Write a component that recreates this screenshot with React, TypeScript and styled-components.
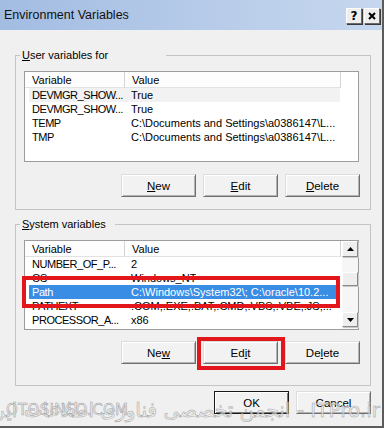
import styled, { createGlobalStyle } from "styled-components";

const GlobalStyle = createGlobalStyle`
  html, body {
    margin: 0;
    padding: 0;
    background: #ffffff;
  }
  body {
    font-family: "Liberation Sans", Arial, sans-serif;
    font-size: 11px;
    color: #000;
  }
`;

const Window = styled.div`
  position: relative;
  width: 384px;
  height: 428px;
  box-sizing: border-box;
  background: #f0f0f0;
  border-right: 2px solid #5c5c5c;
  border-bottom: 2px solid #5c5c5c;
  display: flex;
  flex-direction: column;
  overflow: hidden;
`;

const TitleBar = styled.div`
  height: 30px;
  flex-shrink: 0;
  display: flex;
  align-items: center;
  justify-content: space-between;
  padding: 0 2px 0 4px;
  background: linear-gradient(90deg, #a2bce2 0%, #b9cdea 60%, #c6d7ee 100%);
`;

const Title = styled.span`
  font-size: 12.5px;
  color: #111;
`;

const TitleButtons = styled.div`
  display: flex;
  gap: 2px;
  margin-top: 2px;
`;

const CaptionButton = styled.div`
  width: 16px;
  height: 16px;
  box-sizing: border-box;
  background: #eeeeee;
  border: 1px solid;
  border-color: #ffffff #6a6a6a #6a6a6a #ffffff;
  box-shadow: 1px 1px 0 #3a3a3a;
  display: flex;
  align-items: center;
  justify-content: center;
  font-weight: bold;
  font-size: 12px;
  font-family: "DejaVu Sans", sans-serif;
`;

const Content = styled.div`
  display: flex;
  flex-direction: column;
  padding: 18px 0 0 15px;
`;

const Group = styled.fieldset<{ $padBottom: number; $top?: number }>`
  margin: ${(p) => p.$top ?? 0}px 0 0 0;
  width: 356px;
  box-sizing: border-box;
  min-width: 0;
  border: 1px solid #c4c4c4;
  padding: 0 11px ${(p) => p.$padBottom}px 8px;
`;

const Legend = styled.legend<{ $gap: number }>`
  margin-left: -4px;
  padding: 0 ${(p) => p.$gap}px 0 2px;
  line-height: 14px;
  font-size: 11px;
`;

const List = styled.div<{ $height: number }>`
  position: relative;
  margin-top: 9px;
  height: ${(p) => p.$height}px;
  box-sizing: border-box;
  border: 1px solid #9c9c9c;
  background: #ffffff;
  display: flex;
`;

const Columns = styled.div`
  flex: 1;
  overflow: hidden;
  display: flex;
  flex-direction: column;
`;

const Header = styled.div`
  display: flex;
  height: 16px;
  flex-shrink: 0;
`;

const HeaderCell = styled.div<{ $width: number }>`
  width: ${(p) => p.$width}px;
  box-sizing: border-box;
  padding-left: 7px;
  line-height: 16px;
  border-right: 1px solid #d4d4d4;
  border-bottom: 1px solid #e2e2e2;
  background: #fdfdfd;
`;

const Rows = styled.div`
  padding-left: 4px;
  display: flex;
  flex-direction: column;
`;

const Row = styled.div<{ $selected?: boolean; $focus?: boolean }>`
  display: flex;
  width: 311px;
  height: 14px;
  line-height: 14px;
  white-space: nowrap;
  background: ${(p) => (p.$selected ? "#3a8de4" : p.$focus ? "#f2f2f2" : "transparent")};
  color: ${(p) => (p.$selected ? "#ffffff" : "#000")};
`;

const NameCell = styled.div`
  width: 95px;
  flex-shrink: 0;
  padding-left: 3px;
  box-sizing: border-box;
  letter-spacing: -0.45px;
`;

const ValueCell = styled.div`
  padding-left: 7px;
  overflow: hidden;
`;

const Scrollbar = styled.div`
  width: 16px;
  flex-shrink: 0;
  background: #f6f6f6;
  display: flex;
  flex-direction: column;
`;

const ScrollPart = styled.div<{ $height: number; $top?: number }>`
  height: ${(p) => p.$height}px;
  margin-top: ${(p) => p.$top ?? 0}px;
  box-sizing: border-box;
  background: #eeeeee;
  border: 1px solid;
  border-color: #ffffff #8a8a8a #8a8a8a #ffffff;
  box-shadow: 1px 1px 0 #c8c8c8;
  display: flex;
  align-items: center;
  justify-content: center;
`;

const Spacer = styled.div<{ $fixed?: number }>`
  flex: ${(p) => (p.$fixed ? `0 0 ${p.$fixed}px` : "1")};
`;

const ButtonRow = styled.div<{ $top: number }>`
  margin-top: ${(p) => p.$top}px;
  display: flex;
  justify-content: flex-end;
  gap: 7px;
  margin-right: -1px;
`;

const Button = styled.div<{ $default?: boolean }>`
  position: relative;
  width: 75px;
  height: 23px;
  box-sizing: border-box;
  background: #f2f2f2;
  border: 1px solid;
  border-color: ${(p) =>
    p.$default ? "#1a1a1a" : "#dcdcdc #6f6f6f #6f6f6f #dcdcdc"};
  box-shadow: ${(p) =>
    p.$default
      ? "inset 1px 1px 0 #ffffff, inset -1px -1px 0 #7a7a7a"
      : "inset 1px 1px 0 #ffffff, inset -1px -1px 0 #b4b4b4"};
  display: flex;
  align-items: center;
  justify-content: center;
  font-size: 11.5px;
`;

const Highlight = styled.div<{ $l: number; $t: number; $w: number; $h: number }>`
  position: absolute;
  left: ${(p) => p.$l}px;
  top: ${(p) => p.$t}px;
  width: ${(p) => p.$w}px;
  height: ${(p) => p.$h}px;
  box-sizing: border-box;
  border: 4px solid #e2161b;
  pointer-events: none;
`;

const Footer = styled.div`
  margin-top: 5px;
  width: 356px;
  display: flex;
  justify-content: flex-end;
  gap: 7px;
`;

const Watermark = styled.div`
  position: absolute;
  left: 0;
  right: 2px;
  top: 396px;
  height: 28px;
  pointer-events: none;
`;

const WatermarkLine = styled.div`
  direction: rtl;
  text-align: right;
  white-space: nowrap;
  font-family: "DejaVu Sans", "Noto Sans", sans-serif;
  font-size: 20px;
  line-height: 28px;
  color: rgba(238, 238, 238, 0.6);
  -webkit-text-stroke: 0.5px #a2a2a2;
`;

const WatermarkSite = styled.div`
  position: absolute;
  left: 6px;
  top: 5px;
  font-family: "DejaVu Sans", sans-serif;
  font-size: 15px;
  letter-spacing: 0.3px;
  color: rgba(238, 238, 238, 0.6);
  -webkit-text-stroke: 0.5px #9a9a9a;
`;

const Arrow = ({ up }: { up?: boolean }) => (
  <svg width="7" height="4" viewBox="0 0 7 4">
    <path d={up ? "M0 4 L3.5 0 L7 4 Z" : "M0 0 L3.5 4 L7 0 Z"} fill="#000" />
  </svg>
);

const userVars = [
  ["DEVMGR_SHOW...", "True"],
  ["DEVMGR_SHOW...", "True"],
  ["TEMP", "C:\\Documents and Settings\\a0386147\\L..."],
  ["TMP", "C:\\Documents and Settings\\a0386147\\L..."],
];

const systemVars = [
  ["NUMBER_OF_P...", "2"],
  ["OS", "Windows_NT"],
  ["Path", "C:\\Windows\\System32\\; C:\\oracle\\10.2..."],
  ["PATHEXT", ".COM;.EXE;.BAT;.CMD;.VBS;.VBE;.JS;..."],
  ["PROCESSOR_A...", "x86"],
  ["PROCESSOR_I...", "x86 Family 6 Model 15 Stepping..."],
];

export default function App() {
  return (
    <>
      <GlobalStyle />
      <Window>
        <TitleBar>
          <Title>Environment Variables</Title>
          <TitleButtons>
            <CaptionButton>?</CaptionButton>
            <CaptionButton>
              <svg width="8" height="8" viewBox="0 0 8 8">
                <path d="M1 1 L7 7 M7 1 L1 7" stroke="#000" strokeWidth="2" />
              </svg>
            </CaptionButton>
          </TitleButtons>
        </TitleBar>

        <Content>
          <Group $padBottom={12}>
            <Legend $gap={58}>
              <u>U</u>ser variables for
            </Legend>
            <List $height={91}>
              <Columns>
                <Header>
                  <HeaderCell $width={100}>Variable</HeaderCell>
                  <HeaderCell $width={216}>Value</HeaderCell>
                </Header>
                <Rows>
                  {userVars.map(([name, value], i) => (
                    <Row key={i} $focus={i === 0}>
                      <NameCell>{name}</NameCell>
                      <ValueCell>{value}</ValueCell>
                    </Row>
                  ))}
                </Rows>
              </Columns>
            </List>
            <ButtonRow $top={12}>
              <Button>
                <span>
                  <u>N</u>ew
                </span>
              </Button>
              <Button>
                <span>
                  <u>E</u>dit
                </span>
              </Button>
              <Button>
                <span>
                  <u>D</u>elete
                </span>
              </Button>
            </ButtonRow>
          </Group>

          <Group $padBottom={21} $top={7}>
            <Legend $gap={9}>
              <u>S</u>ystem variables
            </Legend>
            <List $height={90}>
              <Columns>
                <Header>
                  <HeaderCell $width={100}>Variable</HeaderCell>
                  <HeaderCell $width={216}>Value</HeaderCell>
                </Header>
                <Rows>
                  {systemVars.map(([name, value], i) => (
                    <Row key={i} $selected={name === "Path"}>
                      <NameCell>{name}</NameCell>
                      <ValueCell>{value}</ValueCell>
                    </Row>
                  ))}
                </Rows>
              </Columns>
              <Scrollbar>
                <ScrollPart $height={16}>
                  <Arrow up />
                </ScrollPart>
                <ScrollPart $height={14} $top={15} />
                <Spacer />
                <ScrollPart $height={15}>
                  <Arrow />
                </ScrollPart>
                <Spacer $fixed={2} />
              </Scrollbar>
              <Highlight $l={-3} $t={35} $w={318} $h={32} />
            </List>
            <ButtonRow $top={11}>
              <Button>
                <span>
                  Ne<u>w</u>
                </span>
              </Button>
              <Button>
                <span>
                  Ed<u>i</u>t
                </span>
                <Highlight $l={-7} $t={-5} $w={88} $h={33} />
              </Button>
              <Button>
                <span>
                  De<u>l</u>ete
                </span>
              </Button>
            </ButtonRow>
          </Group>

          <Footer>
            <Button $default>OK</Button>
            <Button>Cancel</Button>
          </Footer>
        </Content>

        <Watermark>
          <WatermarkLine>ITPro.ir - انجمن تخصصی فناوری اطلاعات ایران</WatermarkLine>
          <WatermarkSite>OTOSINSO.COM</WatermarkSite>
        </Watermark>
      </Window>
    </>
  );
}
